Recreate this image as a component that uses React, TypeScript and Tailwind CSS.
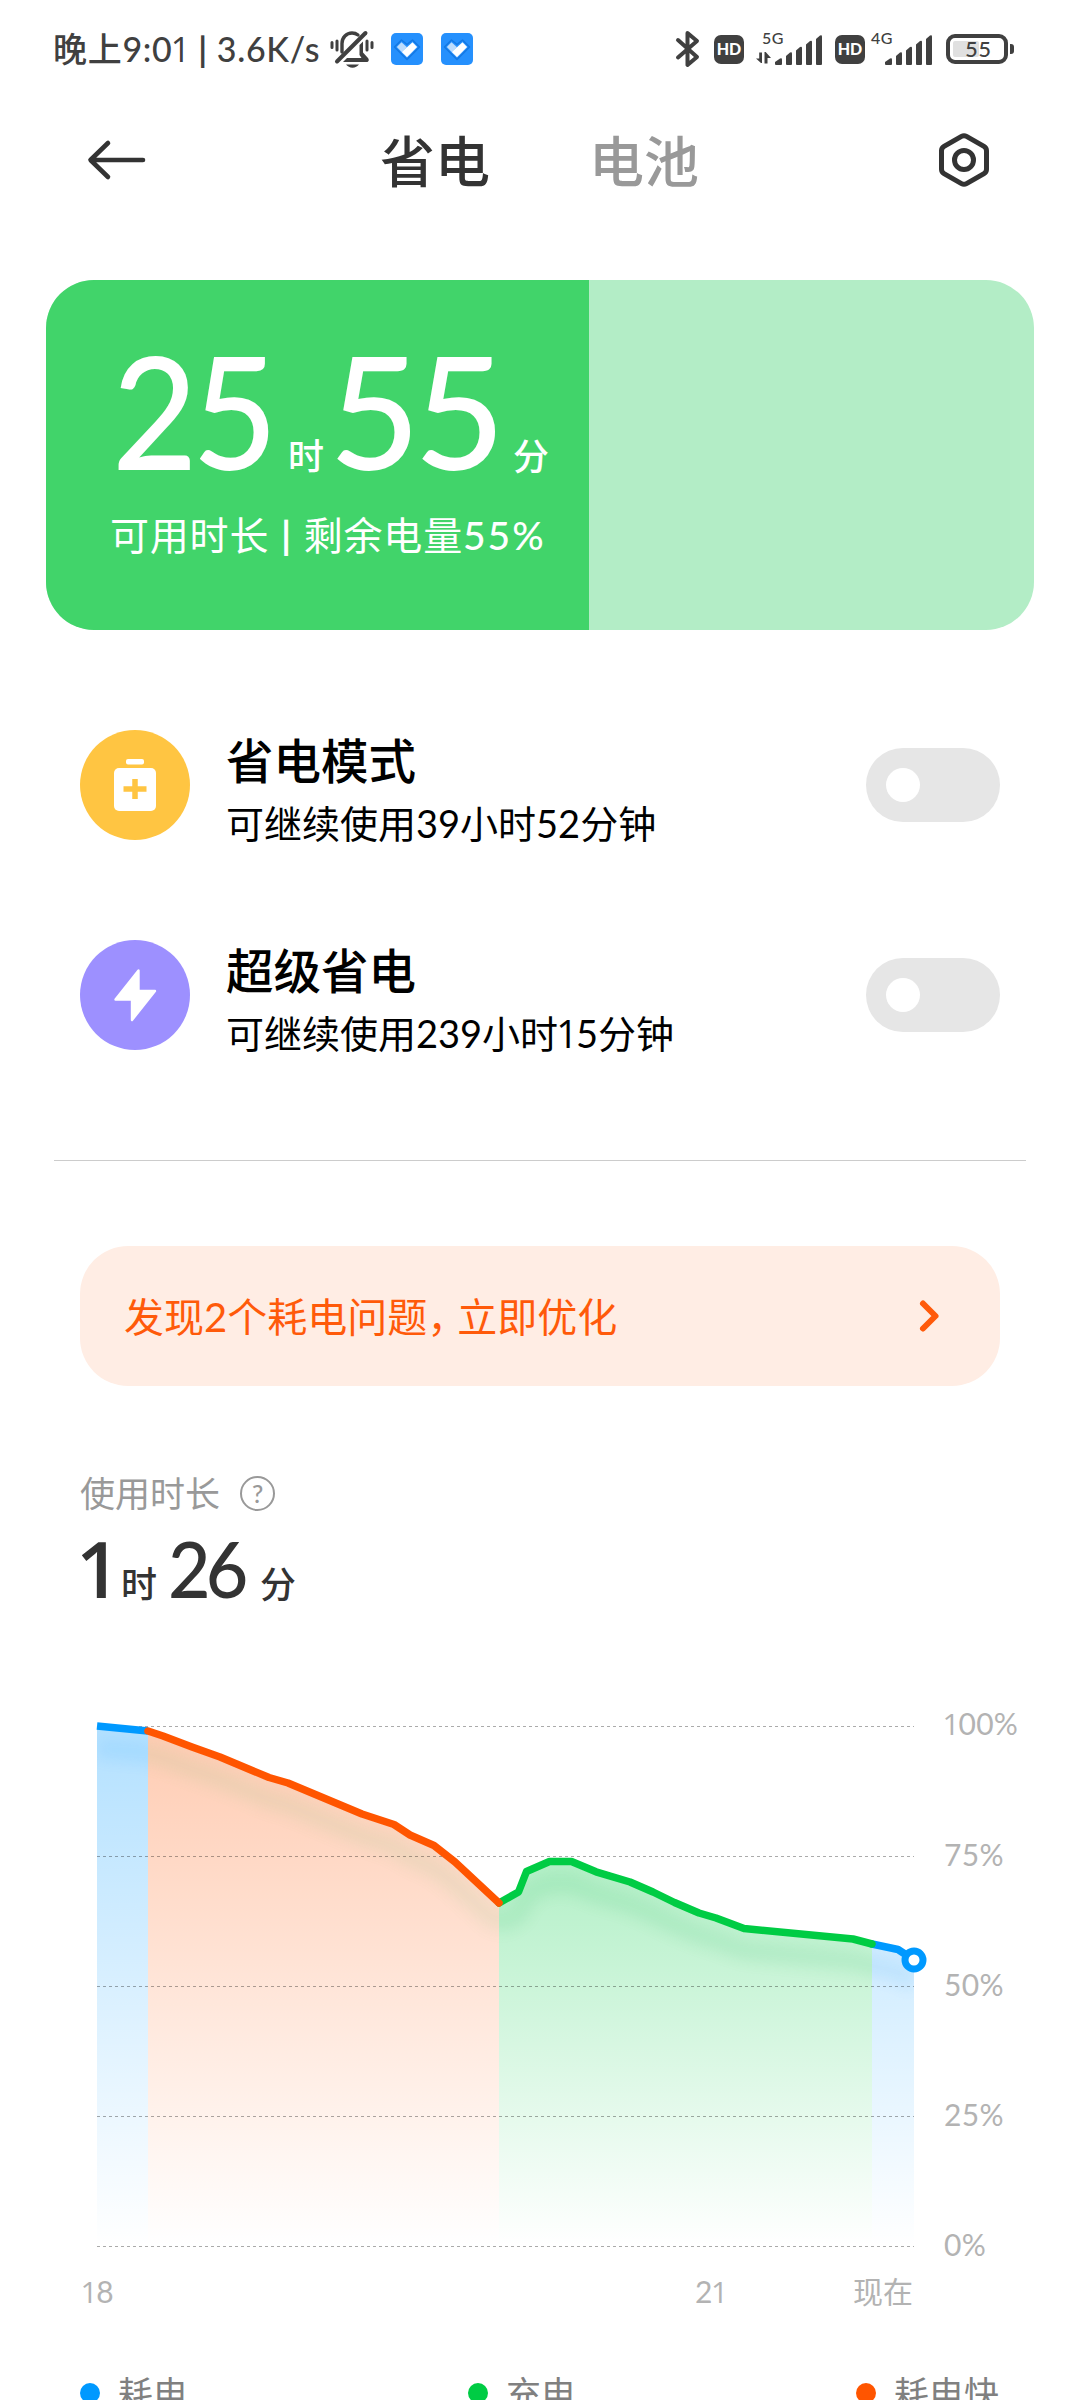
import { FC, Fragment, ReactNode } from 'react';
import clsx from 'clsx';

// Lato draws a foot under the figure one, so that digit is set in Open Sans.
const Num: FC<{ children: string }> = ({ children }) => (
  <>
    {children.split(/(1)/).map((part, i) =>
      part === '1' ? (
        <span key={i} className="mx-[-0.05em] font-['Open_Sans']">
          1
        </span>
      ) : (
        <Fragment key={i}>{part}</Fragment>
      ),
    )}
  </>
);

const MutedBell = () => (
  <svg width="46" height="40" viewBox="0 0 46 40" fill="none">
    <g stroke="#404040" strokeWidth="3" strokeLinecap="round">
      <path d="M3 13.5v5M8 12v9M38 12v9M43 13.5v5" />
      <path
        d="M13 23V14.500C13 8.500 17.500 4 23 4c2.500 0 4.500.800 6 2"
        strokeWidth="3.400"
      />
      <path d="M8 32.500L36.500 4" strokeWidth="4" />
    </g>
    <path
      d="M34 12.500v11l5 5.500c1.500 2 .800 4-1.500 4H14l4-4h14.500l-2-3V16z"
      fill="#404040"
    />
    <path d="M17 35.500h13c-1.500 2-3.800 3.200-6.500 3.200s-5-1.200-6.500-3.200z" fill="#404040" />
  </svg>
);

const HeartBadge = () => (
  <svg width="32" height="32" viewBox="0 0 32 32">
    <rect width="32" height="32" rx="5" fill="#2590fd" />
    <path
      d="M3.500 14L10.500 7l5.500 4.500L21.500 7l7 7L16 26.500z"
      fill="#2590fd"
      stroke="#1479e4"
      strokeWidth="1.600"
      strokeLinejoin="round"
    />
    <path d="M5.800 14l4.700-4.700 5.500 5-5.300 4.700z" fill="#bcdcfd" />
    <path d="M10.700 19L21.500 9.200 26.200 14 16 24.200z" fill="#fff" />
  </svg>
);

const Bluetooth = () => (
  <svg width="26" height="40" viewBox="0 0 26 40" fill="none">
    <path
      d="M3 11l19 17L12.500 36V4l9.500 8L3 28.500"
      stroke="#404040"
      strokeWidth="4"
      strokeLinecap="round"
      strokeLinejoin="round"
    />
  </svg>
);

const HdBadge = () => (
  <div className="flex h-[29px] w-[30px] items-center justify-center rounded-[7px] bg-[#404040] text-[16px] leading-none font-black text-white">
    HD
  </div>
);

const Signal: FC<{ label: string; arrows?: boolean }> = ({ label, arrows }) => (
  <div className="relative h-[34px] w-[66px]">
    <span
      className={clsx(
        'absolute -top-[2px] text-[16px] leading-none font-medium tracking-[0.500px]',
        arrows ? 'left-[6px]' : 'left-[5px]',
      )}
    >
      {label}
    </span>
    <svg width="66" height="34" viewBox="0 0 66 34" fill="#404040">
      {arrows && (
        <path d="M0 26.500l3.200 0V20.500h2.800V31H5zM8.500 20h1.200l5.300 6h-3.500v5.500h-3z" />
      )}
      <path d="M19 30l5-3.500q2-1 2 1V32q0 1-1 1h-5q-1 0-1-1z" />
      <path d="M30 24l4-3.500q2-1 2 1V32q0 1-1 1h-4q-1 0-1-1z" />
      <path d="M40 18.500l4-3.500q2-1 2 1v16q0 1-1 1h-4q-1 0-1-1z" />
      <path d="M50 12.500l4-3.500q2-1 2 1v22q0 1-1 1h-4q-1 0-1-1z" />
      <path d="M60 7l4-3.500q2-1 2 1V32q0 1-1 1h-4q-1 0-1-1z" />
    </svg>
  </div>
);

const BatteryLevel = () => (
  <div className="flex items-center gap-[2px]">
    <div className="flex h-[30px] w-[62px] rounded-[9px] border-4 border-[#404040] p-[3px]">
      <div className="relative h-full w-full">
        <div className="h-full w-[55%] rounded-[2px] bg-[#e0e0e0]" />
        <span className="absolute -top-[3px] left-[12px] text-[22px] leading-none font-medium tracking-[0.500px]">
          55
        </span>
      </div>
    </div>
    <div className="h-[10px] w-1 rounded-r-[3px] bg-[#404040]" />
  </div>
);

const StatusBar = () => (
  <div className="flex h-[98px] items-center pl-[53px] font-medium text-[#404040]">
    <div className="flex w-[276px] items-center text-[34px] tracking-[0.700px] whitespace-pre">
      <span>
        晚上<Num>9:01</Num>
        <span className="font-bold"> | </span>3.6K/s
      </span>
    </div>
    <MutedBell />
    <div className="ml-4 flex gap-[18px]">
      <HeartBadge />
      <HeartBadge />
    </div>
    <div className="ml-auto flex items-center pr-[66px]">
      <Bluetooth />
      <div className="ml-[13px]">
        <HdBadge />
      </div>
      <div className="ml-[12px]">
        <Signal label="5G" arrows />
      </div>
      <div className="ml-[13px]">
        <HdBadge />
      </div>
      <div className="ml-[1px]">
        <Signal label="4G" />
      </div>
      <div className="ml-[14px]">
        <BatteryLevel />
      </div>
    </div>
  </div>
);

const Header = () => (
  <header className="flex h-[124px] items-center pr-[89px] pl-[86px]">
    <svg width="62" height="44" viewBox="0 0 62 44" fill="none">
      <path
        d="M57 22H5M22 5L4.500 22 22 39"
        stroke="#333"
        strokeWidth="4.600"
        strokeLinecap="round"
        strokeLinejoin="round"
      />
    </svg>
    <nav className="ml-[232px] flex gap-[99px] pt-[3px] text-[55px] leading-none font-medium">
      <span className="text-[#333]">省电</span>
      <span className="text-[#999]">电池</span>
    </nav>
    <svg
      className="ml-auto"
      width="54"
      height="56"
      viewBox="0 0 54 56"
      fill="none"
      stroke="#333"
      strokeWidth="5"
    >
      <path
        d="M24.500 4.400q2.500-1.400 5 0l17.500 10q2.500 1.500 2.500 4.300v18.600q0 2.800-2.500 4.300l-17.500 10q-2.500 1.400-5 0l-17.500-10q-2.500-1.500-2.500-4.300V18.700q0-2.800 2.500-4.300z"
        strokeLinejoin="round"
      />
      <circle cx="27" cy="28" r="9.500" />
    </svg>
  </header>
);

const RemainingCard = () => (
  <section className="mx-[46px] mt-[58px] h-[350px] overflow-hidden rounded-[48px] bg-[#b3edc6]">
    <div className="flex h-full w-[55%] flex-col bg-[#41d46a] pt-[51px] pl-[66px] text-white">
      <div className="flex h-[156px] items-baseline leading-[156px] whitespace-nowrap">
        <span className="w-[176px] origin-left scale-x-[0.94] text-[157px] font-medium tracking-[-6px]">
          25
        </span>
        <span className="w-[41px] text-[36px] font-medium">时</span>
        <span className="w-[184px] text-[157px] font-medium tracking-[-6px]">55</span>
        <span className="text-[36px] font-medium">分</span>
      </div>
      <p className="mt-[18px] -ml-[2px] text-[39px] leading-[60px] tracking-[0.800px] whitespace-nowrap">
        可用时长<span className="mx-[1.500px] font-bold"> | </span>剩余电量
        <span className="font-medium tracking-[2px]">55%</span>
      </p>
    </div>
  </section>
);

type ModeProps = {
  title: string;
  hint: string;
  color: string;
  icon: ReactNode;
};

const ModeRow: FC<ModeProps> = ({ title, hint, color, icon }) => (
  <div className="flex h-[210px] items-center px-20">
    <div className={clsx('h-[110px] w-[110px] rounded-full', color)}>{icon}</div>
    <div className="ml-[36px] flex flex-col pt-3 text-black">
      <h2 className="text-[47.500px] leading-[64px] font-medium">{title}</h2>
      <p className="text-[38px] leading-[60px]">
        <Num>{hint}</Num>
      </p>
    </div>
    <div className="ml-auto flex h-[74px] w-[134px] items-center rounded-full bg-[#e6e6e6] pl-5">
      <div className="h-[34px] w-[34px] rounded-full bg-white" />
    </div>
  </div>
);

const PlusBatteryIcon = () => (
  <svg viewBox="0 0 110 110">
    <rect x="46" y="29" width="18" height="5.500" rx="2" fill="#fff" />
    <rect x="34" y="38" width="42" height="43" rx="5" fill="#fff" />
    <path d="M55 49v20M43.500 59h23" stroke="#ffc542" strokeWidth="5.500" />
  </svg>
);

const BoltIcon = () => (
  <svg viewBox="0 0 110 110">
    <path
      d="M58.500 30.500V51H75L52 80V59.500H35.500z"
      fill="#fff"
      stroke="#fff"
      strokeWidth="2.400"
      strokeLinejoin="round"
    />
  </svg>
);

const IssueBanner = () => (
  <div className="mx-20 mt-[85px] flex h-[140px] items-center justify-between rounded-[48px] bg-[#ffede4] pr-[58px] pl-11 text-[#ff5a0a]">
    <span className="pt-[2px] text-[40px] leading-none">
      发现2个耗电问题
      <span className="mr-[10px] [font-feature-settings:'halt']">，</span>
      立即优化
    </span>
    <svg width="24" height="36" viewBox="0 0 24 36" fill="none">
      <path
        d="M5 5.500L17.500 18 5 30.500"
        stroke="#ff5a0a"
        strokeWidth="6"
        strokeLinecap="round"
        strokeLinejoin="round"
      />
    </svg>
  </div>
);

const UsageSummary = () => (
  <div className="px-20 pt-[82px]">
    <div className="flex h-[50px] items-center text-[#999]">
      <span className="text-[35px] leading-none">使用时长</span>
      <span className="ml-5 flex h-[35px] w-[35px] items-center justify-center rounded-full border-2 border-[#999] text-[25px] leading-none font-medium">
        ?
      </span>
    </div>
    <div className="mt-[4px] flex h-[92px] items-baseline leading-[92px] text-[#333]">
      <span className="w-[41px] text-[78px] font-semibold">
        <Num>1</Num>
      </span>
      <span className="w-[47px] text-[36px] font-medium">时</span>
      <span className="w-[92px] origin-left scale-x-[0.94] text-[78px] font-medium tracking-[-5px]">
        26
      </span>
      <span className="text-[36px] font-medium">分</span>
    </div>
  </div>
);

const PLOT_BOTTOM = 540;

const segments = [
  {
    id: 'drain',
    color: '#0099ff',
    shade: '#0099ff',
    top: 20,
    alpha: 0.3,
    points: [[17, 20], [68, 25]],
  },
  {
    id: 'latest',
    color: '#0099ff',
    shade: '#0088ee',
    top: 239,
    alpha: 0.19,
    points: [[792, 238], [818, 243.5], [834, 254]],
  },
  {
    id: 'charge',
    color: '#00cc44',
    shade: '#00aa44',
    top: 155,
    alpha: 0.3,
    points: [
      [419, 197], [438.5, 186], [446.5, 165.5], [469.5, 155.5], [491.5, 155.5],
      [516, 165.8], [550, 176], [573, 186], [594.5, 196.5], [619, 207],
      [636, 212], [664, 222.5], [773, 233], [792, 238],
    ],
  },
  {
    id: 'fast',
    color: '#ff5500',
    shade: '#55bb66',
    top: 25,
    alpha: 0.3,
    points: [
      [68, 25], [83, 30], [112, 41], [140, 51], [189, 71.5], [208, 77],
      [282, 108], [314, 118.5], [330, 129], [354, 139.5], [375, 156],
      [419, 197],
    ],
  },
];

const toPath = (points: number[][]) =>
  points.map(([x, y], i) => `${i ? 'L' : 'M'}${x} ${y}`).join('');

const toArea = (points: number[][]) =>
  `${toPath(points)}V${PLOT_BOTTOM}H${points[0][0]}z`;

const BatteryChart = () => (
  <div className="flex h-[560px] pl-20">
    <svg width="850" height="560" viewBox="0 0 850 560" fill="none">
      <defs>
        <filter id="soft" x="-20%" y="-50%" width="140%" height="220%">
          <feGaussianBlur stdDeviation="8" />
        </filter>
        {segments.map(({ id, color, top, alpha, points }) => (
          <Fragment key={id}>
            <linearGradient
              id={`fill-${id}`}
              gradientUnits="userSpaceOnUse"
              x1="0"
              x2="0"
              y1={top}
              y2={PLOT_BOTTOM}
            >
              <stop offset="0" stopColor={color} stopOpacity={alpha} />
              <stop offset="1" stopColor={color} stopOpacity="0" />
            </linearGradient>
            <clipPath id={`clip-${id}`}>
              <path d={toArea(points)} />
            </clipPath>
          </Fragment>
        ))}
      </defs>
      {segments.map(({ id, shade, points }) => (
        <g key={id}>
          <path d={toArea(points)} fill={`url(#fill-${id})`} />
          <g clipPath={`url(#clip-${id})`}>
            <g filter="url(#soft)" opacity="0.1" transform="translate(0 22)">
              <path
                d={[2, 3, 0, 1].map((n) => toPath(segments[n].points)).join('')}
                stroke={shade}
                strokeWidth="18"
              />
            </g>
          </g>
        </g>
      ))}
      {[20, 150, 280, 410, 540].map((y) => (
        <path
          key={y}
          d={`M17 ${y + 0.5}H834`}
          stroke="#000"
          strokeOpacity="0.33"
          strokeDasharray="3 3"
        />
      ))}
      {segments.map(({ id, color, points }) => (
        <path
          key={id}
          d={toPath(points)}
          stroke={color}
          strokeWidth="7.500"
          strokeLinejoin="round"
          strokeLinecap={id === 'drain' ? 'butt' : 'round'}
        />
      ))}
      <circle cx="834" cy="254" r="9" fill="#fff" stroke="#0099ff" strokeWidth="7" />
    </svg>
    <div className="-mt-px ml-[14px] flex flex-col gap-[94px] text-[30px] leading-[36px] tracking-[0.300px] text-[#b3b3b3]">
      {['100%', '75%', '50%', '25%', '0%'].map((label) => (
        <span key={label}>
          <Num>{label}</Num>
        </span>
      ))}
    </div>
  </div>
);

const legend = [
  { label: '耗电', dot: 'bg-[#0099ff]' },
  { label: '充电', dot: 'bg-[#00cc44]' },
  { label: '耗电快', dot: 'bg-[#ff5500]' },
];

export default function App() {
  return (
    <main className="h-[2400px] w-[1080px] overflow-hidden bg-white font-[Lato,'Noto_Sans_CJK_SC',sans-serif]">
      <StatusBar />
      <Header />
      <RemainingCard />
      <section className="mt-[50px] pb-[60px]">
        <ModeRow
          title="省电模式"
          hint="可继续使用39小时52分钟"
          color="bg-[#ffc542]"
          icon={<PlusBatteryIcon />}
        />
        <ModeRow
          title="超级省电"
          hint="可继续使用239小时15分钟"
          color="bg-[#9d90ff]"
          icon={<BoltIcon />}
        />
      </section>
      <hr className="mx-[54px] border-t border-[#ccc]" />
      <IssueBanner />
      <UsageSummary />
      <div className="mt-[92px]">
        <BatteryChart />
      </div>
      <div className="mt-[4px] flex h-[42px] items-center pr-[167px] pl-[82px] text-[30px] leading-none text-[#b3b3b3]">
        <span className="w-[613px]">
          <Num>18</Num>
        </span>
        <span>
          <Num>21</Num>
        </span>
        <span className="ml-auto">现在</span>
      </div>
      <div className="mt-[54px] flex justify-between pr-[81px] pl-20 text-[35px] leading-[54px] text-[#808080]">
        {legend.map(({ label, dot }) => (
          <div key={label} className="flex items-center">
            <span className={clsx('mr-[18px] h-5 w-5 rounded-full', dot)} />
            {label}
          </div>
        ))}
      </div>
    </main>
  );
}
